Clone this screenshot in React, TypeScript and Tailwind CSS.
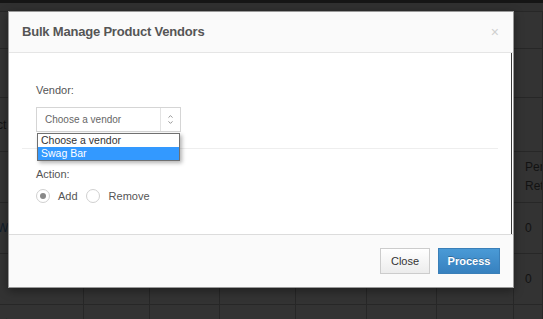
import { ChevronUp, ChevronDown } from "lucide-react";

const cols = [84, 66, 70, 76, 71, 70, 77, 29];

const Row = ({ h, cells }: { h: number; cells?: Record<number, React.ReactNode> }) => (
    <div className="flex border-b border-[#272727]" style={{ height: h }}>
        {cols.map((w, i) => (
            <div
                key={i}
                className="border-r border-[#272727] flex items-center text-[12px] text-[#121212] overflow-hidden whitespace-nowrap"
                style={{ width: w, minWidth: w }}
            >
                {cells?.[i]}
            </div>
        ))}
    </div>
);

const App = () => {
    return (
        <div className="relative w-[543px] h-[319px] overflow-hidden bg-[#333333] font-['Liberation_Sans',Arial,sans-serif]">
            {/* page behind the backdrop */}
            <div className="h-[3px] bg-[#151515]" />
            <div className="h-[9px] bg-[#303030] border-b border-[#272727]" />
            <div className="flex flex-col">
                <Row h={37} />
                <Row h={49} />
                <Row h={54} cells={{ 0: <span className="-ml-[3px]">ct</span> }} />
                <Row
                    h={51}
                    cells={{
                        7: (
                            <div className="pl-[11px] leading-[19px]">
                                <div>Per</div>
                                <div>Ret</div>
                            </div>
                        ),
                    }}
                />
                <Row h={51} cells={{ 0: <span className="-ml-[3px] text-[#0f1c2a]">Wh</span>, 7: <span className="pl-[11px]">0</span> }} />
                <Row h={51} cells={{ 7: <span className="pl-[11px]">0</span> }} />
                <Row h={20} cells={{ 0: <span className="pl-[3px] pt-[14px]">+</span> }} />
            </div>

            {/* modal */}
            <div className="absolute left-[8px] top-[11px] w-[506px] flex flex-col bg-white border border-[#999] shadow-[0_3px_9px_rgba(0,0,0,0.4)]">
                <div className="h-[41px] bg-[#fafafa] border-b border-[#e5e5e5] flex items-center justify-between pl-[13px] pr-[14px]">
                    <h3 className="text-[13px] font-bold text-[#555] tracking-[-0.2px]">Bulk Manage Product Vendors</h3>
                    <span className="text-[14px] leading-none text-[#cfcfcf]">×</span>
                </div>

                <div className="relative h-[181px] bg-white border-r border-[#3a3a3a] mr-[1px] pt-[29px]">
                    <label className="block pl-[27px] text-[11px] text-[#555]">Vendor:</label>
                    <div className="relative ml-[27px] mt-[8px] w-[145px] h-[25px] border border-[#d5d5d5] flex items-center">
                        <span className="pl-[8px] flex-1 text-[10px] text-[#666]">Choose a vendor</span>
                        <div className="w-[20px] h-full border-l border-[#e3e3e3] flex flex-col items-center justify-center text-[#888]">
                            <ChevronUp size={7} strokeWidth={3} className="-mb-[1px]" />
                            <ChevronDown size={7} strokeWidth={3} />
                        </div>
                        <div className="absolute left-[0px] top-[25px] w-[143px] bg-white border border-[#707070] shadow-[2px_2px_4px_rgba(0,0,0,0.3)] z-10 text-[10.5px] leading-[13px]">
                            <div className="pl-[3px] text-[#333]">Choose a vendor</div>
                            <div className="pl-[3px] bg-[#3399ff] text-white">Swag Bar</div>
                        </div>
                    </div>
                    <div className="mx-[13px] mt-[16px] border-t border-[#eeeeee]" />
                    <label className="block pl-[27px] mt-[17px] text-[11px] text-[#555]">Action:</label>
                    <div className="flex items-center pl-[27px] mt-[6px] text-[11px] text-[#555]">
                        <span className="w-[14px] h-[14px] rounded-full border border-[#d0d0d0] flex items-center justify-center">
                            <span className="w-[6px] h-[6px] rounded-full bg-[#888]" />
                        </span>
                        <span className="ml-[8px]">Add</span>
                        <span className="ml-[8px] w-[14px] h-[14px] rounded-full border border-[#d0d0d0]" />
                        <span className="ml-[9px]">Remove</span>
                    </div>
                </div>

                <div className="h-[53px] bg-[#fafafa] border-t border-[#dcdcdc] flex items-center justify-end gap-[8px] pr-[13px]">
                    <button className="w-[50px] h-[26px] border border-[#ccc] bg-gradient-to-b from-white to-[#ececec] text-[11px] text-[#333]">
                        Close
                    </button>
                    <button className="w-[62px] h-[26px] border border-[#3a7fb8] bg-gradient-to-b from-[#4a9ad6] to-[#3781bf] text-[11px] font-bold text-white [text-shadow:0_-1px_0_rgba(0,0,0,0.25)]">
                        Process
                    </button>
                </div>
            </div>
        </div>
    );
};

export default App;
